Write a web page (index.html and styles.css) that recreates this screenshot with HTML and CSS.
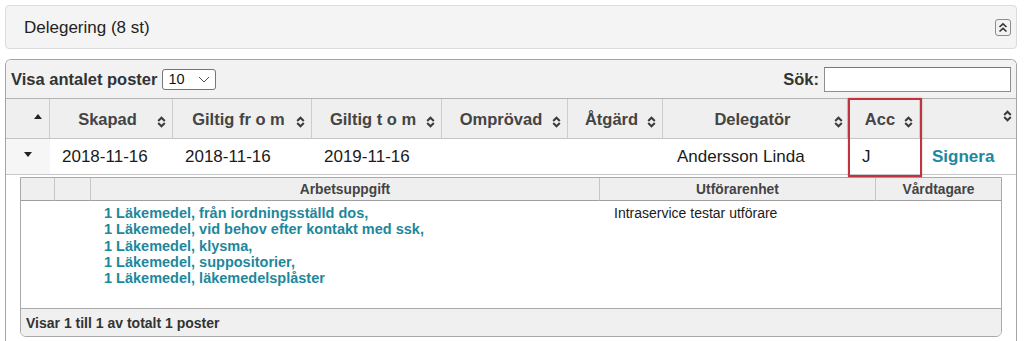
FILE: index.html
```html
<!DOCTYPE html>
<html lang="sv">
<head>
<meta charset="utf-8">
<title>Delegering</title>
<link rel="stylesheet" href="styles.css">
</head>
<body>
<div class="page">
  <div class="section-head">
    <span class="section-title">Delegering (8 st)</span>
    <span class="collapse-btn">
      <svg width="10" height="11" viewBox="0 0 10 11"><path d="M1.5 5 L5 1.8 L8.5 5 M1.5 9.5 L5 6.3 L8.5 9.5" fill="none" stroke="#333" stroke-width="1.6"/></svg>
    </span>
  </div>

  <div class="panel">
    <div class="toolbar">
      <div class="length">Visa antalet poster
        <span class="select"><span>10</span><svg width="12" height="7" viewBox="0 0 12 7"><path d="M1 1 L6 6 L11 1" fill="none" stroke="#555" stroke-width="1"/></svg></span>
      </div>
      <div class="search">Sök: <span class="input"></span></div>
    </div>

    <table class="grid">
      <colgroup>
        <col class="c-ctl"><col class="c-skapad"><col class="c-from"><col class="c-tom"><col class="c-omp"><col class="c-atg"><col class="c-del"><col class="c-acc"><col class="c-last">
      </colgroup>
      <thead>
        <tr>
          <th class="ctl"><div class="h"><span></span><svg class="tri" width="8" height="5" viewBox="0 0 8 5"><polygon points="0,5 4,0 8,5" fill="#222"/></svg></div></th>
          <th><div class="h"><span>Skapad</span><svg class="sort" width="9" height="12" viewBox="0 0 9 12"><path d="M1.2 5 L4.5 1.7 L7.8 5 M1.2 7 L4.5 10.3 L7.8 7" fill="none" stroke="#3a3a3a" stroke-width="2"/></svg></div></th>
          <th><div class="h"><span>Giltig fr o m</span><svg class="sort" width="9" height="12" viewBox="0 0 9 12"><path d="M1.2 5 L4.5 1.7 L7.8 5 M1.2 7 L4.5 10.3 L7.8 7" fill="none" stroke="#3a3a3a" stroke-width="2"/></svg></div></th>
          <th><div class="h"><span>Giltig t o m</span><svg class="sort" width="9" height="12" viewBox="0 0 9 12"><path d="M1.2 5 L4.5 1.7 L7.8 5 M1.2 7 L4.5 10.3 L7.8 7" fill="none" stroke="#3a3a3a" stroke-width="2"/></svg></div></th>
          <th><div class="h"><span>Omprövad</span><svg class="sort" width="9" height="12" viewBox="0 0 9 12"><path d="M1.2 5 L4.5 1.7 L7.8 5 M1.2 7 L4.5 10.3 L7.8 7" fill="none" stroke="#3a3a3a" stroke-width="2"/></svg></div></th>
          <th><div class="h"><span>Åtgärd</span><svg class="sort" width="9" height="12" viewBox="0 0 9 12"><path d="M1.2 5 L4.5 1.7 L7.8 5 M1.2 7 L4.5 10.3 L7.8 7" fill="none" stroke="#3a3a3a" stroke-width="2"/></svg></div></th>
          <th><div class="h"><span>Delegatör</span><svg class="sort tight" width="9" height="12" viewBox="0 0 9 12"><path d="M1.2 5 L4.5 1.7 L7.8 5 M1.2 7 L4.5 10.3 L7.8 7" fill="none" stroke="#3a3a3a" stroke-width="2"/></svg></div></th>
          <th><div class="h"><span>Acc</span><svg class="sort" width="9" height="12" viewBox="0 0 9 12"><path d="M1.2 5 L4.5 1.7 L7.8 5 M1.2 7 L4.5 10.3 L7.8 7" fill="none" stroke="#3a3a3a" stroke-width="2"/></svg></div></th>
          <th class="last"><div class="h top"><span></span><svg class="sort tight" width="9" height="12" viewBox="0 0 9 12"><path d="M1.2 5 L4.5 1.7 L7.8 5 M1.2 7 L4.5 10.3 L7.8 7" fill="none" stroke="#3a3a3a" stroke-width="2"/></svg></div></th>
        </tr>
      </thead>
      <tbody>
        <tr class="row">
          <td class="ctl"><svg width="8" height="5" viewBox="0 0 8 5"><polygon points="0,0 8,0 4,5" fill="#222"/></svg></td>
          <td>2018-11-16</td>
          <td>2018-11-16</td>
          <td>2019-11-16</td>
          <td></td>
          <td></td>
          <td class="del">Andersson Linda</td>
          <td class="acc">J</td>
          <td class="sign"><a href="#">Signera</a></td>
        </tr>
        <tr class="detail">
          <td colspan="9">
            <div class="sub">
              <table class="subgrid">
                <colgroup><col class="s1"><col class="s2"><col class="s3"><col class="s4"><col class="s5"></colgroup>
                <thead>
                  <tr><th></th><th></th><th>Arbetsuppgift</th><th>Utförarenhet</th><th class="nr">Vårdtagare</th></tr>
                </thead>
                <tbody>
                  <tr>
                    <td></td><td></td>
                    <td class="tasks">
                      <a href="#">1 Läkemedel, från iordningsställd dos,</a>
                      <a href="#">1 Läkemedel, vid behov efter kontakt med ssk,</a>
                      <a href="#">1 Läkemedel, klysma,</a>
                      <a href="#">1 Läkemedel, suppositorier,</a>
                      <a href="#">1 Läkemedel, läkemedelsplåster</a>
                    </td>
                    <td class="unit">Intraservice testar utförare</td>
                    <td></td>
                  </tr>
                </tbody>
              </table>
              <div class="sub-footer">Visar 1 till 1 av totalt 1 poster</div>
            </div>
          </td>
        </tr>
      </tbody>
    </table>

    <div class="highlight"></div>
  </div>
</div>
</body>
</html>
```

FILE: styles.css
```css
* { box-sizing: border-box; }
html, body { margin: 0; padding: 0; background: #fff; }
body {
  font-family: "Liberation Sans", Arial, sans-serif;
  color: #222;
  overflow: hidden;
}
.page {
  padding: 5px 0 0 5px;
}
.section-head {
  width: 1012px;
  height: 44px;
  border: 1px solid #dcdcdc;
  border-radius: 4px;
  background: #f4f4f4;
  display: flex;
  align-items: center;
  justify-content: space-between;
  padding: 0 5px 0 18px;
}
.section-title {
  font-size: 17px;
  color: #222;
  margin-top: 1px;
}
.collapse-btn {
  width: 16px;
  height: 17px;
  border: 1px solid #8c8c8c;
  border-radius: 3px;
  background: #f2f2f2;
  display: flex;
  align-items: center;
  justify-content: center;
}
.panel {
  position: relative;
  width: 1012px;
  margin-top: 10px;
  border: 1px solid #a5a5a5;
  border-bottom: none;
  border-radius: 6px 6px 0 0;
  background: #fff;
  height: 290px;
}
.toolbar {
  height: 39px;
  background: #f2f2f2;
  border-bottom: 1px solid #b4b4b4;
  border-radius: 5px 5px 0 0;
  display: flex;
  align-items: center;
  justify-content: space-between;
  padding: 0 5px 0 5px;
  font-size: 16.5px;
  font-weight: bold;
  color: #333;
}
.length, .search {
  display: flex;
  align-items: center;
}
.select {
  display: inline-flex;
  align-items: center;
  justify-content: space-between;
  width: 54px;
  height: 21px;
  margin-left: 5px;
  border: 1px solid #767676;
  border-radius: 3px;
  background: #fff;
  padding: 0 5px 0 5px;
  font-size: 14.5px;
  font-weight: normal;
  color: #111;
}
.input {
  display: inline-block;
  width: 187px;
  height: 25px;
  margin-left: 5px;
  border: 1px solid #8e8e8e;
  border-top-color: #777;
  background: #fff;
}
.grid {
  width: 1010px;
  table-layout: fixed;
  border-collapse: separate;
  border-spacing: 0;
}
.c-ctl { width: 44px; }
.c-skapad { width: 123px; }
.c-from { width: 139px; }
.c-tom { width: 130px; }
.c-omp { width: 126px; }
.c-atg { width: 95px; }
.c-del { width: 185px; }
.c-acc { width: 72px; }
.c-last { width: 96px; }

.grid th {
  height: 40px;
  padding: 0;
  background: #efefef;
  border-right: 1px solid #cdcdcd;
  border-bottom: 1px solid #c4c4c4;
  font-size: 16.5px;
  font-weight: bold;
  color: #444;
}
.grid th.last { border-right: none; }
.h {
  display: flex;
  align-items: center;
  height: 39px;
  padding-left: 8px;
}
.h span {
  flex: 1;
  text-align: center;
  white-space: nowrap;
  margin-top: 2px;
}
.h .sort {
  margin-right: 6px;
  margin-top: 7px;
}
.h .sort.tight { margin-right: 4px; }
.h.top { align-items: flex-start; }
.h.top .sort { margin-top: 11px; }
.h .tri {
  margin-right: 7px;
  margin-bottom: 4px;
}

.row td {
  height: 36px;
  padding: 0 0 0 12px;
  border-bottom: 1px solid #c8c8c8;
  font-size: 17px;
  color: #1a1a1a;
  white-space: nowrap;
}
.row td.ctl {
  padding: 0;
  text-align: center;
  background: #f6f6f6;
}
.row td.ctl svg { display: block; margin: 0 auto 4px; }
.row td.del { padding-left: 14px; }
.row td.acc { padding-left: 14px; }
.row td.sign a {
  font-weight: bold;
  color: #2087a0;
  text-decoration: none;
}

.detail > td {
  padding: 2px 14px 0 14px;
}
.sub {
  border: 1px solid #a9a9a9;
  border-radius: 0 0 6px 6px;
  overflow: hidden;
}
.subgrid {
  width: 980px;
  table-layout: fixed;
  border-collapse: separate;
  border-spacing: 0;
}
.s1 { width: 34px; }
.s2 { width: 36px; }
.s3 { width: 509px; }
.s4 { width: 276px; }
.s5 { width: 125px; }
.subgrid th {
  height: 23px;
  padding: 0;
  background: #efefef;
  border-right: 1px solid #c6c6c6;
  border-bottom: 1px solid #9f9f9f;
  font-size: 13.8px;
  font-weight: bold;
  color: #444;
  text-align: center;
}
.subgrid th.nr { border-right: none; }
.subgrid td {
  height: 107px;
  vertical-align: top;
  padding: 4px 0 0 0;
}
.subgrid td.tasks {
  padding-left: 13px;
}
.tasks a {
  display: block;
  font-size: 14.5px;
  line-height: 16.3px;
  font-weight: bold;
  color: #1d879c;
  text-decoration: none;
  white-space: nowrap;
}
.subgrid td.unit {
  padding-left: 14px;
  font-size: 14px;
  line-height: 16.3px;
  color: #1a1a1a;
}
.sub-footer {
  height: 28px;
  background: #f0f0f0;
  border-top: 1px solid #a9a9a9;
  display: flex;
  align-items: center;
  padding-left: 5px;
  font-size: 14px;
  font-weight: bold;
  color: #333;
}
.highlight {
  position: absolute;
  left: 842px;
  top: 38px;
  width: 74px;
  height: 79px;
  border: 2px solid #c3333f;
  box-shadow: 0 0 2px rgba(0, 0, 0, 0.25);
  pointer-events: none;
}
```
